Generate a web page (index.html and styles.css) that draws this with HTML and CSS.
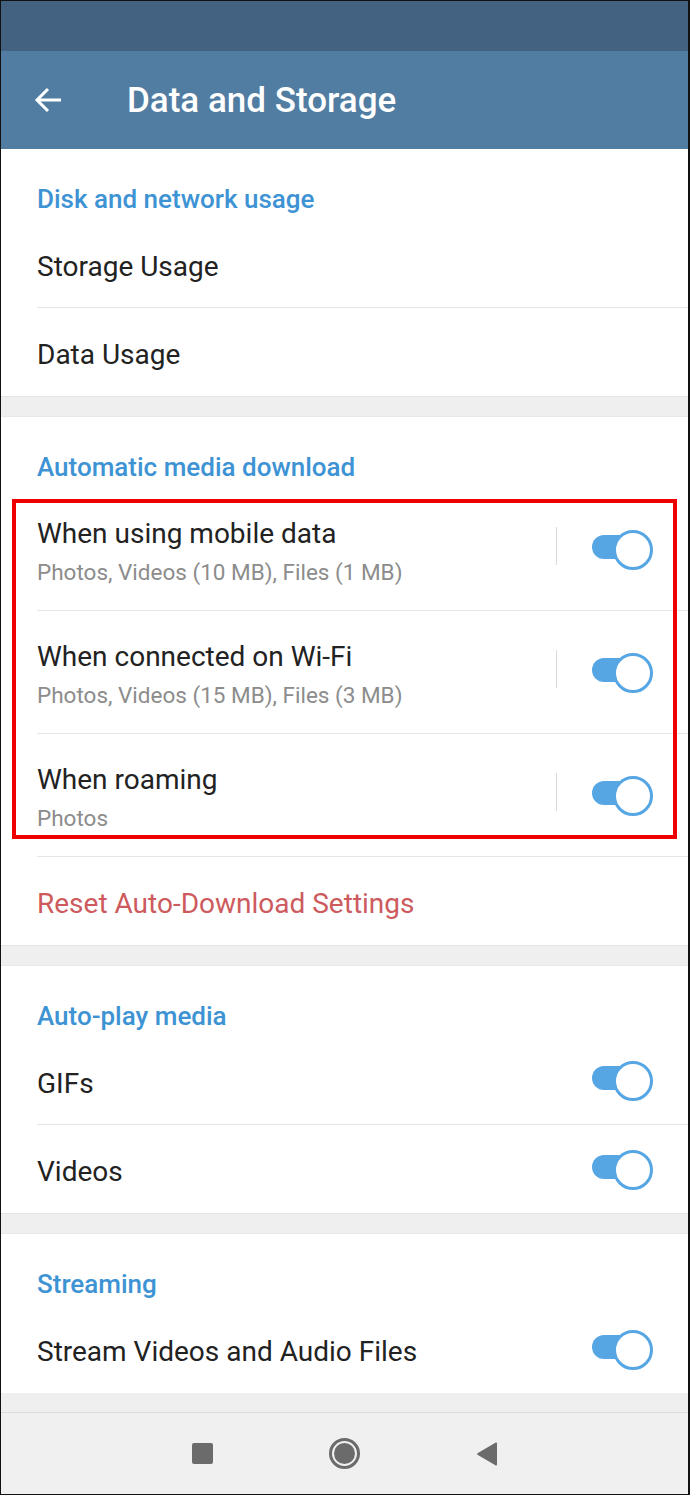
FILE: index.html
```html
<!DOCTYPE html>
<html lang="en">
<head>
  <meta charset="UTF-8">
  <meta name="viewport" content="width=device-width, initial-scale=1.0">
  <title>Data and Storage</title>
  <link rel="stylesheet" href="styles.css">
</head>
<body>

  <div class="screen">
    <div class="status-bar"></div>

    <header class="app-bar">
      <svg class="back" width="28" height="26" viewBox="0 0 28 26">
        <path d="M27 13H3M14 2L3 13l11 11" fill="none" stroke="#fff" stroke-width="3"/>
      </svg>
      <h1>Data and Storage</h1>
    </header>

    <main class="settings">
      <section class="group">
        <h2 class="group-title">Disk and network usage</h2>
        <div class="row"><span class="label">Storage Usage</span></div>
        <div class="row"><span class="label">Data Usage</span></div>
      </section>

      <div class="gap"></div>

      <section class="group">
        <h2 class="group-title">Automatic media download</h2>
        <div class="row row-double">
          <div class="text">
            <span class="label">When using mobile data</span>
            <span class="sub">Photos, Videos (10 MB), Files (1 MB)</span>
          </div>
          <span class="split"></span>
          <span class="toggle"></span>
        </div>
        <div class="row row-double">
          <div class="text">
            <span class="label">When connected on Wi-Fi</span>
            <span class="sub">Photos, Videos (15 MB), Files (3 MB)</span>
          </div>
          <span class="split"></span>
          <span class="toggle"></span>
        </div>
        <div class="row row-double">
          <div class="text">
            <span class="label">When roaming</span>
            <span class="sub">Photos</span>
          </div>
          <span class="split"></span>
          <span class="toggle"></span>
        </div>
        <div class="row"><span class="label danger">Reset Auto-Download Settings</span></div>
      </section>

      <div class="gap"></div>

      <section class="group">
        <h2 class="group-title">Auto-play media</h2>
        <div class="row"><span class="label">GIFs</span><span class="toggle"></span></div>
        <div class="row"><span class="label">Videos</span><span class="toggle"></span></div>
      </section>

      <div class="gap"></div>

      <section class="group">
        <h2 class="group-title">Streaming</h2>
        <div class="row"><span class="label">Stream Videos and Audio Files</span><span class="toggle"></span></div>
      </section>
    </main>

    <nav class="nav-bar">
      <span class="nav-btn"><span class="nav-square"></span></span>
      <span class="nav-btn"><span class="nav-home"></span></span>
      <span class="nav-btn">
        <svg width="22" height="24" viewBox="0 0 22 24"><path d="M21 1.5v21a1 1 0 0 1-1.6.8L1.5 12.8a1 1 0 0 1 0-1.6L19.4.7A1 1 0 0 1 21 1.5z" fill="#6b6b6b"/></svg>
      </span>
    </nav>

    <!-- red frame around the auto-download rows -->
    <div class="highlight"></div>
  </div>

</body>
</html>
```

FILE: styles.css
```css
* {
  box-sizing: border-box;
}
body {
  margin: 0;
  font-family: Roboto, "Noto Sans", Arial, sans-serif;
  background: #fff;
}
.screen {
  position: relative;
  width: 690px;
  height: 1495px;
  border: 1px solid #111;
  border-right-width: 2px;
  display: flex;
  flex-direction: column;
  background: #efefef;
  overflow: hidden;
}
.status-bar {
  height: 50px;
  background: #436282;
}
.app-bar {
  height: 98px;
  background: #517da2;
  display: flex;
  align-items: center;
  padding-left: 33px;
}
.app-bar h1 {
  margin: 0 0 0 65px;
  color: #fff;
  font-size: 35px;
  font-weight: 500;
}
.back {
  display: block;
}

.group {
  background: #fff;
}
.group-title {
  margin: 0;
  height: 71px;
  padding: 35px 0 0 36px;
  font-size: 26px;
  line-height: 30px;
  font-weight: 500;
  color: #3d93d3;
}
.gap {
  height: 21px;
  border-top: 1px solid #e3e3e3;
  border-bottom: 1px solid #e8e8e8;
}
.row {
  display: flex;
  align-items: center;
  height: 88px;
  margin-left: 36px;
  padding-right: 35px;
}
.row:not(:last-child) {
  border-bottom: 1px solid #e6e6e6;
}
.row > .label {
  padding-top: 6px;
}
.row-double {
  height: 123px;
  align-items: flex-start;
}
.label {
  font-size: 28px;
  line-height: 30px;
  color: #222;
  flex: 1;
}
.label.danger {
  color: #cd5b5e;
}
.text {
  flex: 1;
  display: flex;
  flex-direction: column;
  padding-top: 31px;
}
.sub {
  margin-top: 10px;
  font-size: 22.5px;
  line-height: 26px;
  color: #8c8c8c;
}
.split {
  align-self: center;
  width: 1px;
  height: 38px;
  background: #dadada;
  margin: 0 35px 6px 0;
}

/* switch: track with a ringed knob on the right */
.toggle {
  position: relative;
  align-self: center;
  width: 61px;
  height: 34px;
  margin-bottom: 5px;
  flex: none;
}
.toggle::before {
  content: "";
  position: absolute;
  left: 0;
  top: 5px;
  width: 50px;
  height: 24px;
  border-radius: 12px;
  background: #56a6e4;
}
.toggle::after {
  content: "";
  position: absolute;
  right: 0;
  top: 0;
  width: 34px;
  height: 34px;
  border-radius: 50%;
  background: #fff;
  border: 3px solid #56a6e4;
}

.nav-bar {
  margin-top: auto;
  height: 82px;
  border-top: 1px solid #dcdcdc;
  background: #f0f0f0;
  display: flex;
  justify-content: center;
  align-items: center;
}
.nav-btn {
  width: 142px;
  display: flex;
  justify-content: center;
  align-items: center;
}
.nav-square {
  width: 21px;
  height: 21px;
  border-radius: 2px;
  background: #6b6b6b;
}
.nav-home {
  width: 31px;
  height: 31px;
  border-radius: 50%;
  border: 3px solid #6b6b6b;
  padding: 2px;
  background: #6b6b6b content-box;
}

.highlight {
  position: absolute;
  left: 11px;
  top: 498px;
  width: 665px;
  height: 340px;
  border: 4px solid #ee0000;
}
```
